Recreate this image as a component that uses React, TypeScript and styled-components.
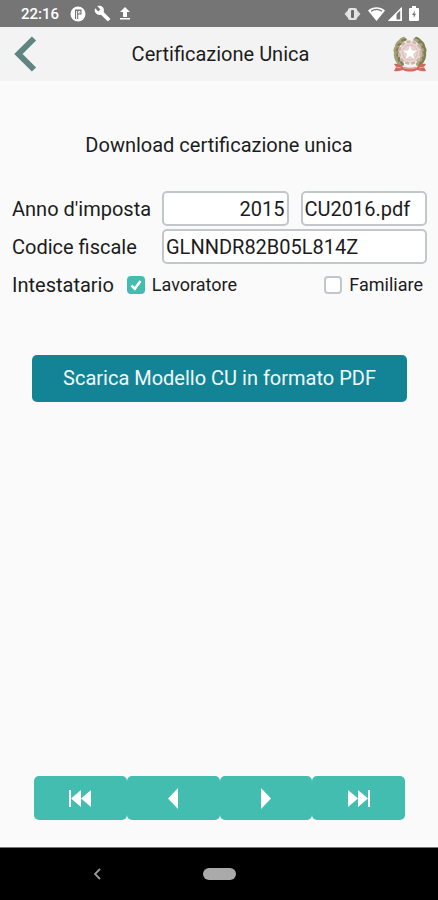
import React, { useState } from "react";
import styled, { createGlobalStyle } from "styled-components";

const GlobalStyle = createGlobalStyle`
  *, *::before, *::after { box-sizing: border-box; }
  body {
    margin: 0;
    background: #fafafa;
    color: #1c1c1c;
    font-family: Roboto, "Liberation Sans", sans-serif;
    font-size: 20px;
    line-height: 24px;
  }
  button, input { font: inherit; color: inherit; }
`;

const Screen = styled.div`
  min-height: 100vh;
  display: flex;
  flex-direction: column;
`;

const StatusBar = styled.div`
  height: 27px;
  padding: 0 19px 0 21px;
  display: flex;
  align-items: center;
  justify-content: space-between;
  background: #757575;
  color: #fff;
`;

const StatusGroup = styled.div<{ $gap: number }>`
  display: flex;
  align-items: center;
  gap: ${(p) => p.$gap}px;
`;

const Clock = styled.time`
  font-size: 15px;
  font-weight: 500;
  line-height: 20px;
  margin-right: 3px;
`;

const Header = styled.header`
  height: 54px;
  padding: 0 11px 0 14px;
  display: grid;
  grid-template-columns: 34px 1fr 34px;
  align-items: center;
  background: #f3f3f3;
`;

const Title = styled.h1`
  margin: 0;
  font-size: 20px;
  font-weight: 400;
  text-align: center;
`;

const BackButton = styled.button`
  display: flex;
  padding: 0;
  border: 0;
  background: none;
  cursor: pointer;
`;

const Content = styled.main`
  flex: 1;
  display: flex;
  flex-direction: column;
  padding: 52px 0 27px;
`;

const Subtitle = styled.h2`
  margin: 0 0 34px;
  font-size: 20px;
  font-weight: 400;
  text-align: center;
`;

const Form = styled.form`
  display: flex;
  flex-direction: column;
  gap: 3px;
  padding: 0 11px 0 12px;
`;

const FormRow = styled.div`
  display: grid;
  grid-template-columns: 142px 1fr;
  column-gap: 8px;
  align-items: center;
`;

const FieldLabel = styled.label`
  white-space: nowrap;
`;

const Fields = styled.div`
  display: flex;
  gap: 12px;
`;

const TextField = styled.input<{ $align?: "left" | "right" }>`
  flex: 1;
  width: 100%;
  min-width: 0;
  height: 35px;
  padding: 0 2px;
  border: 2px solid #c2c7ca;
  border-radius: 5px;
  background: #fff;
  text-align: ${(p) => p.$align ?? "left"};
`;

const OwnerRow = styled.div`
  display: flex;
  align-items: center;
  height: 36px;
`;

const OwnerLabel = styled.span`
  margin-right: 13px;
`;

const CheckLabel = styled.label<{ $last?: boolean }>`
  display: flex;
  align-items: center;
  gap: 7px;
  font-size: 18px;
  margin-left: ${(p) => (p.$last ? "auto" : "0")};
  margin-right: ${(p) => (p.$last ? "4px" : "0")};
`;

const CheckBox = styled.input`
  appearance: none;
  width: 18px;
  height: 18px;
  margin: 0;
  border: 2px solid #c2c7ca;
  border-radius: 4px;
  background: #fff;
  &:checked {
    border-color: #44bdb1;
    background: #44bdb1;
  }
`;

const CheckHolder = styled.span`
  display: grid;
  > * { grid-area: 1 / 1; }
  > svg { pointer-events: none; }
`;

const DownloadButton = styled.button`
  height: 47px;
  margin: 52px 31px 0 32px;
  padding: 0 0 2px;
  border: 0;
  border-radius: 5px;
  background: #138496;
  color: #f2fbfc;
  cursor: pointer;
`;

const Pager = styled.nav`
  display: grid;
  grid-template-columns: repeat(4, 1fr);
  margin: auto 33px 0 34px;
`;

const PagerButton = styled.button`
  height: 44px;
  padding: 0;
  display: flex;
  align-items: center;
  justify-content: center;
  border: 0;
  border-radius: 5px;
  background: #44bdb1;
  cursor: pointer;
`;

const SystemBar = styled.footer`
  height: 53px;
  display: grid;
  grid-template-columns: 1fr auto 1fr;
  align-items: center;
  padding-right: 8px;
  padding-left: 8px;
  background: #000;
  border-top: 1px solid #777;
`;

const SystemButton = styled.button`
  justify-self: center;
  display: flex;
  padding: 0 16px 0 0;
  border: 0;
  background: none;
`;

const HomePill = styled.button`
  width: 33px;
  height: 12px;
  padding: 0;
  border: 0;
  border-radius: 6px;
  background: #aaa;
`;

const AppIcon = () => (
  <svg width="16" height="16" viewBox="0 0 16 16" aria-hidden="true">
    <circle cx="8" cy="8" r="7.500" fill="#fff" />
    <path d="M5 3.500h6.500v5H8.200V13H5z" fill="#757575" />
    <path d="M6.600 5v8M8.500 5.500h1.500v1.500H8.500z" stroke="#fff" strokeWidth="1" />
  </svg>
);

const WrenchIcon = () => (
  <svg width="17" height="17" viewBox="0 0 24 24" aria-hidden="true">
    <path
      fill="#fff"
      d="M22.7 19l-9.1-9.1c.9-2.3.4-5-1.5-6.9-2-2-5-2.4-7.4-1.3L9 6 6 9 1.6 4.7C.4 7.1.9 10.1 2.9 12.1c1.9 1.9 4.6 2.4 6.9 1.5l9.1 9.1c.4.4 1 .4 1.4 0l2.3-2.3c.5-.4.5-1.1.1-1.4z"
    />
  </svg>
);

const UploadIcon = () => (
  <svg width="12" height="13" viewBox="0 0 12 13" aria-hidden="true">
    <path fill="#fff" d="M6 0l5 5H8v5H4V5H1zM1 11h10v1.600H1z" />
  </svg>
);

const VibrateIcon = () => (
  <svg width="17" height="14" viewBox="0 0 17 14" aria-hidden="true">
    <path d="M4.500 2.500L.5 7l4 4.500zM12.500 2.500L16.500 7l-4 4.500z" fill="#dedede" />
    <rect x="4" y="1" width="9" height="12" rx="2" fill="#e4e4e4" />
    <rect x="7" y="3" width="3" height="8" rx="1" fill="#6b6b6b" />
  </svg>
);

const WifiIcon = () => (
  <svg width="17" height="14" viewBox="0 0 17 14" aria-hidden="true">
    <path d="M8.500 14L0 3.500C5-.9 12-.9 17 3.500z" fill="#fff" />
    <path d="M3 4.200C6.300 2 10.700 2 14 4.200" fill="none" stroke="#757575" strokeWidth="1.300" />
  </svg>
);

const SignalIcon = () => (
  <svg width="14" height="14" viewBox="0 0 14 14" aria-hidden="true">
    <path d="M13.200 1.500V13.200H1.500z" fill="none" stroke="#fff" strokeWidth="1.400" />
    <path d="M1 13.500L8.500 6v7.500zM12.500 1h1.300v13h-1.300z" fill="#fff" />
  </svg>
);

const BatteryIcon = () => (
  <svg width="10" height="15" viewBox="0 0 10 15" aria-hidden="true">
    <path d="M3 0h4v2h2a1 1 0 0 1 1 1v11a1 1 0 0 1-1 1H1a1 1 0 0 1-1-1V3a1 1 0 0 1 1-1h2z" fill="#fff" />
    <path d="M6 4.500L3 9h1.700v3L7 7.800H5.500z" fill="#757575" />
  </svg>
);

const BackIcon = () => (
  <svg width="23" height="36" viewBox="0 0 23 36" aria-hidden="true">
    <path d="M20 2.500L4.500 18 20 33.500" fill="none" stroke="#5f8582" strokeWidth="6" />
  </svg>
);

const leaves = [
  [7, 28, -55], [4, 24, -25], [3, 19, 0], [3, 14, 18], [5, 9, 32], [9, 5, 50],
];

const Emblem = () => (
  <svg width="34" height="38" viewBox="0 0 34 38" role="img" aria-label="Repubblica Italiana">
    {leaves.map(([x, y, a]) => (
      <g key={y}>
        <ellipse cx={x} cy={y} rx="2.200" ry="4" fill="#a3a177" transform={`rotate(${a} ${x} ${y})`} />
        <ellipse cx={x + 2} cy={y} rx="1.400" ry="3" fill="#7d8054" transform={`rotate(${a + 25} ${x + 2} ${y})`} />
        <ellipse cx={34 - x} cy={y} rx="2.200" ry="4" fill="#7c8153" transform={`rotate(${-a} ${34 - x} ${y})`} />
        <ellipse cx={32 - x} cy={y} rx="1.400" ry="3" fill="#aaa47c" transform={`rotate(${-a - 25} ${32 - x} ${y})`} />
      </g>
    ))}
    <circle cx="17" cy="17.500" r="11" fill="#e8d9d4" />
    <circle cx="17" cy="17.500" r="11" fill="none" stroke="#ceb3ab" strokeWidth="2.500" strokeDasharray="4 2" />
    <circle cx="17" cy="17.500" r="7.500" fill="none" stroke="#dcc4be" strokeWidth="1.500" />
    <path d="M17 9l2.200 6 6.300.1-5 3.900 1.800 6.200-5.300-3.700-5.300 3.700 1.800-6.200-5-3.900 6.300-.1z" fill="#fff" stroke="#e0c3bd" strokeWidth=".8" />
    <path d="M1 29c4-1 7 1 9 3 4 1 10 1 14 0 2-2 5-4 9-3l-2 3 2 4c-4 1-7-1-9-1-4 2-10 2-14 0-2 0-5 2-9 1l2-4z" fill="#d0685f" />
    <path d="M10 32.500c4 1.800 10 1.800 14 0M3 32l5 1M31 32l-5 1" fill="none" stroke="#eba9a1" strokeWidth="1" />
  </svg>
);

const CheckMark = () => (
  <svg width="18" height="18" viewBox="0 0 18 18" aria-hidden="true">
    <path d="M4.500 9.500L7.800 12.800 13.500 5" fill="none" stroke="#fff" strokeWidth="2.500" />
  </svg>
);

const pagerIcons = [
  { label: "Primo", d: "M2 2h2v17H2zM14 2v17L4 10.500zM24 2v17L14 10.500z" },
  { label: "Precedente", d: "M18 0v21L8 10.500z" },
  { label: "Successivo", d: "M8 0v21L18 10.500z" },
  { label: "Ultimo", d: "M22 2h2v17h-2zM2 2v17L12 10.500zM12 2v17L22 10.500z" },
];

const owners = ["Lavoratore", "Familiare"];

export default function App() {
  const [owner, setOwner] = useState("Lavoratore");
  return (
    <>
      <GlobalStyle />
      <Screen>
        <StatusBar>
          <StatusGroup $gap={8}>
            <Clock>22:16</Clock>
            <AppIcon />
            <WrenchIcon />
            <UploadIcon />
          </StatusGroup>
          <StatusGroup $gap={7}>
            <VibrateIcon />
            <StatusGroup $gap={3}>
              <WifiIcon />
              <SignalIcon />
            </StatusGroup>
            <BatteryIcon />
          </StatusGroup>
        </StatusBar>
        <Header>
          <BackButton type="button" aria-label="Indietro">
            <BackIcon />
          </BackButton>
          <Title>Certificazione Unica</Title>
          <Emblem />
        </Header>
        <Content>
          <Subtitle>Download certificazione unica</Subtitle>
          <Form onSubmit={(e) => e.preventDefault()}>
            <FormRow>
              <FieldLabel htmlFor="year">Anno d'imposta</FieldLabel>
              <Fields>
                <TextField id="year" $align="right" defaultValue="2015" />
                <TextField aria-label="Nome file" defaultValue="CU2016.pdf" />
              </Fields>
            </FormRow>
            <FormRow>
              <FieldLabel htmlFor="code">Codice fiscale</FieldLabel>
              <TextField id="code" defaultValue="GLNNDR82B05L814Z" />
            </FormRow>
            <OwnerRow role="group" aria-labelledby="owner">
              <OwnerLabel id="owner">Intestatario</OwnerLabel>
              {owners.map((name, i) => (
                <CheckLabel key={name} $last={i === 1}>
                  <CheckHolder>
                    <CheckBox type="checkbox" checked={owner === name} onChange={() => setOwner(name)} />
                    {owner === name && <CheckMark />}
                  </CheckHolder>
                  {name}
                </CheckLabel>
              ))}
            </OwnerRow>
          </Form>
          <DownloadButton type="button">Scarica Modello CU in formato PDF</DownloadButton>
          <Pager aria-label="Navigazione">
            {pagerIcons.map((icon) => (
              <PagerButton key={icon.label} type="button" aria-label={icon.label}>
                <svg width="26" height="21" viewBox="0 0 26 21" aria-hidden="true">
                  <path d={icon.d} fill="#fff" />
                </svg>
              </PagerButton>
            ))}
          </Pager>
        </Content>
        <SystemBar>
          <SystemButton type="button" aria-label="Indietro">
            <svg width="8" height="12" viewBox="0 0 8 12" aria-hidden="true">
              <path d="M7 1L2 6l5 5" fill="none" stroke="#999" strokeWidth="1.800" />
            </svg>
          </SystemButton>
          <HomePill type="button" aria-label="Home" />
        </SystemBar>
      </Screen>
    </>
  );
}
